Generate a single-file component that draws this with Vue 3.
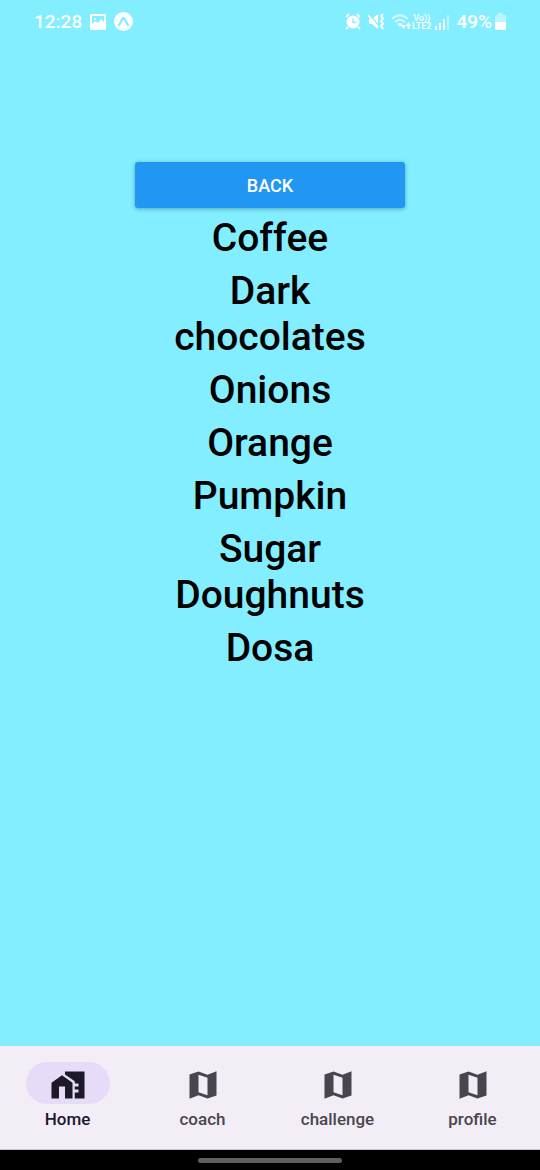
<script setup>
import { ref } from 'vue'

const foods = ['Coffee', 'Dark chocolates', 'Onions', 'Orange', 'Pumpkin', 'Sugar Doughnuts', 'Dosa']
const tabs = [
  { label: 'Home', icon: 'home' },
  { label: 'coach', icon: 'map' },
  { label: 'challenge', icon: 'map' },
  { label: 'profile', icon: 'map' },
]
const active = ref('Home')
</script>

<template>
  <div class="screen">
    <header class="status">
      <div class="group left">
        <span class="time">12:28</span>
        <svg width="16" height="16" viewBox="0 0 16 16" aria-hidden="true">
          <path fill="#fff" fill-rule="evenodd" d="M1 0h14l1 1v14l-1 1H1l-1-1V1zM2 2v8l3-3 3 2 3-4 3 3V2z" />
          <circle cx="5" cy="5" r="1" fill="#fff" />
        </svg>
        <svg width="19" height="19" viewBox="0 0 19 19" aria-hidden="true">
          <circle cx="9.500" cy="9.500" r="9.500" fill="#fff" />
          <path d="M5 13C7 11 8 6 9.500 6S12 11 14 13" fill="none" stroke="#82eeff" stroke-width="2.400" stroke-linecap="round" />
        </svg>
      </div>
      <div class="group right">
        <svg class="alarm" width="16" height="17" viewBox="0 0 16 17" aria-hidden="true">
          <circle cx="8" cy="9" r="6.500" fill="#fff" />
          <path d="M8 5.500v4h3.500" fill="none" stroke="#82eeff" stroke-width="1.500" />
          <path d="M1 4l3-3M15 4l-3-3M3 14l-2 2M13 14l2 2" fill="none" stroke="#fff" stroke-width="1.800" />
        </svg>
        <svg class="mute" width="17" height="17" viewBox="0 0 17 17" aria-hidden="true">
          <path d="M1 6h3l6-5v15l-6-5H1z" fill="#fff" />
          <path d="M1 1l10 12" stroke="#82eeff" stroke-width="1.400" />
          <path d="M0 2l10 12" stroke="#fff" stroke-width="1.600" />
          <path d="M15 1l-2 2 2 2.500-2 2.500 2 2.500-2 2.500 2 3" fill="none" stroke="#fff" stroke-width="2" />
        </svg>
        <svg class="wifi" width="21" height="17" viewBox="0 0 21 17" aria-hidden="true">
          <path d="M1 6q8-7.500 16 0M4 9q5-4.500 10 0" fill="none" stroke="#fff" stroke-width="1.700" opacity=".75" />
          <path d="M6 11q3-2 6 0l-3 3z" fill="#fff" opacity=".75" />
          <path d="M10 12h5l-2.500 4zM15 13l2.500-4 2.500 4h-1.500v3h-2v-3z" fill="#fff" />
        </svg>
        <span class="network"><span>Vo))</span><span>LTE2</span></span>
        <svg class="signal" width="15" height="16" viewBox="0 0 15 16" aria-hidden="true">
          <path d="M1 12h2v4H1zM5 9h2v7H5zM9 5h2v11H9z" fill="#fff" />
          <path d="M13 1h2v15h-2z" fill="#fff" opacity=".4" />
        </svg>
        <span class="percent">49%</span>
        <svg width="11" height="17" viewBox="0 0 11 17" aria-hidden="true">
          <path d="M3 0h5v2h2l1 1v6H0V3l1-1h2z" fill="#fff" opacity=".45" />
          <path d="M0 9h11v7l-1 1H1l-1-1z" fill="#fff" />
        </svg>
      </div>
    </header>

    <main class="content">
      <button type="button" class="back">BACK</button>
      <ul class="foods">
        <li v-for="food in foods" :key="food">{{ food }}</li>
      </ul>
    </main>

    <nav class="tabs">
      <button
        v-for="tab in tabs"
        :key="tab.label"
        type="button"
        class="tab"
        :class="{ active: active === tab.label }"
        @click="active = tab.label"
      >
        <span class="pill">
          <svg v-if="tab.icon === 'home'" width="36" height="36" viewBox="0 0 24 24" fill="currentColor" aria-hidden="true">
            <path d="M1 10.500v10.500h5v-8h4v8h5V10.500L8 5.500z" />
            <path d="M10 3v2l6.500 4.500V11H19v2h-2.500v2H19v2h-2.500v4H23V3z" />
          </svg>
          <svg v-else width="36" height="36" viewBox="0 0 24 24" fill="currentColor" aria-hidden="true">
            <path d="M15 5.100L9 3 3 5.020v16.200l6-2.330 6 2.100 6-2.020V2.790zM15 18.890l-6-2.110V5.110l6 2.110z" />
          </svg>
        </span>
        <span class="label">{{ tab.label }}</span>
      </button>
    </nav>
    <footer class="gesture"><span class="handle"></span></footer>
  </div>
</template>

<style>
body {
  margin: 0;
}
</style>

<style scoped>
.screen {
  min-height: 100vh;
  display: flex;
  flex-direction: column;
  background: #82eeff;
  font-family: Roboto, "Noto Sans", sans-serif;
  color: #000;
}
.status {
  display: flex;
  justify-content: space-between;
  align-items: center;
  height: 43px;
  padding: 0 34px;
  color: #fff;
  font-size: 19px;
  line-height: 22px;
  font-weight: 500;
}
.group {
  display: flex;
  align-items: center;
}
.left {
  gap: 8px;
}
.alarm {
  margin-right: 7px;
}
.mute {
  margin-right: 6px;
}
.network {
  display: flex;
  flex-direction: column;
  align-items: center;
  font-size: 9px;
  line-height: 8px;
}
.signal {
  margin: 0 7px 0 3px;
}
.percent {
  margin-right: 3px;
}
.content {
  flex: 1;
  display: flex;
  flex-direction: column;
  align-items: center;
  padding-top: 119px;
}
.back {
  width: 50%;
  height: 46px;
  padding: 2px 0 0;
  border: 0;
  border-radius: 3px;
  background: #2196f3;
  color: #fff;
  font: 500 18px/22px Roboto, sans-serif;
  box-shadow: 0 1px 4px rgba(0, 60, 90, 0.4);
}
.foods {
  width: 50%;
  margin: 7px 0 0;
  padding: 0;
  list-style: none;
  display: flex;
  flex-direction: column;
  gap: 7px;
  font-size: 39px;
  line-height: 46px;
  font-weight: 500;
  text-align: center;
}
.tabs {
  display: flex;
  padding: 16px 0 20px;
  background: #f3edf6;
  border-bottom: 1px solid #c9c4cc;
}
.tab {
  flex: 1;
  display: flex;
  flex-direction: column;
  align-items: center;
  gap: 5px;
  padding: 0;
  border: 0;
  background: none;
  color: #49454f;
  font: 500 17px/20px Roboto, sans-serif;
}
.tab.active {
  color: #1d192b;
}
.pill {
  box-sizing: border-box;
  display: flex;
  justify-content: center;
  align-items: center;
  width: 84px;
  height: 42px;
  padding-top: 4px;
  border-radius: 21px;
}
.active .pill {
  background: #e6dcf7;
}
.gesture {
  display: flex;
  justify-content: center;
  align-items: center;
  height: 20px;
  background: #000;
}
.handle {
  width: 144px;
  height: 5px;
  border-radius: 3px;
  background: #5f5f5f;
}
</style>
